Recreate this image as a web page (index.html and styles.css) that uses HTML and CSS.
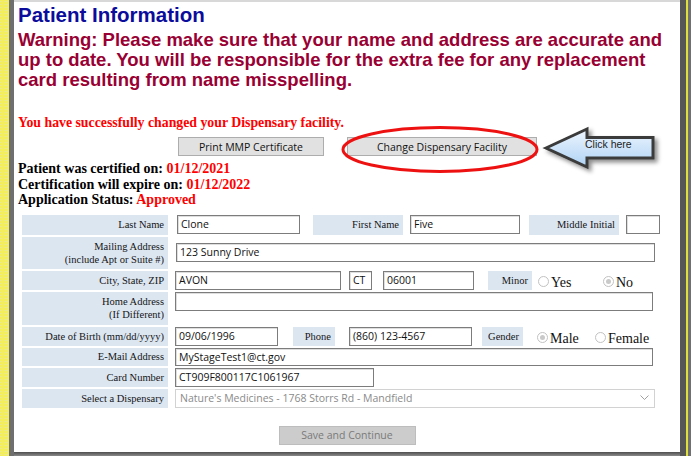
FILE: index.html
```html
<!DOCTYPE html>
<html>
<head>
<meta charset="utf-8">
<link rel="stylesheet" href="styles.css">
</head>
<body>
<div class="page">
  <div class="tex"></div>
  <div class="col">
    <div class="topline"></div>
    <div class="panel">
      <h1 class="title">Patient Information</h1>
      <p class="warn">Warning: Please make sure that your name and address are accurate and<br>up to date. You will be responsible for the extra fee for any replacement<br>card resulting from name misspelling.</p>
      <div class="success">You have successfully changed your Dispensary facility.</div>
      <div class="btnrow">
        <div class="btn print">Print MMP Certificate</div>
        <div class="btn change">Change Dispensary Facility</div>
      </div>
      <div class="cert">
        <div>Patient was certified on: <span class="red">01/12/2021</span></div>
        <div>Certification will expire on: <span class="red">01/12/2022</span></div>
        <div>Application Status: <span class="red">Approved</span></div>
      </div>
      <div class="form">
        <div class="row r1">
          <div class="lb">Last Name</div>
          <div class="in w-clone">Clone</div>
          <div class="lbi w-fn">First Name</div>
          <div class="in w-first">Five</div>
          <div class="lbi w-mi">Middle Initial</div>
          <div class="in w-mid"></div>
        </div>
        <div class="row r2">
          <div class="lb"><span>Mailing Address</span><span>(include Apt or Suite #)</span></div>
          <div class="in w-mail">123 Sunny Drive</div>
        </div>
        <div class="row r3">
          <div class="lb">City, State, ZIP</div>
          <div class="in w-city">AVON</div>
          <div class="in w-st">CT</div>
          <div class="in w-zip">06001</div>
          <div class="lbi w-minor">Minor</div>
          <div class="opt o-yes"><span class="rad"></span><span class="ot">Yes</span></div>
          <div class="opt"><span class="rad on"></span><span class="ot">No</span></div>
        </div>
        <div class="row r4">
          <div class="lb"><span>Home Address</span><span>(If Different)</span></div>
          <div class="in w-home"></div>
        </div>
        <div class="row r5">
          <div class="lb">Date of Birth (mm/dd/yyyy)</div>
          <div class="in w-dob">09/06/1996</div>
          <div class="lbi w-phone">Phone</div>
          <div class="in w-ph">(860) 123-4567</div>
          <div class="lbi w-gender">Gender</div>
          <div class="opt o-male"><span class="rad on"></span><span class="ot">Male</span></div>
          <div class="opt"><span class="rad"></span><span class="ot">Female</span></div>
        </div>
        <div class="row r6">
          <div class="lb">E-Mail Address</div>
          <div class="in w-email">MyStageTest1@ct.gov</div>
        </div>
        <div class="row r7">
          <div class="lb">Card Number</div>
          <div class="in w-card">CT909F800117C1061967</div>
        </div>
        <div class="row r8">
          <div class="lb">Select a Dispensary</div>
          <div class="sel"><span>Nature's Medicines - 1768 Storrs Rd - Mandfield</span><svg class="chev" width="9" height="6" viewBox="0 0 9 6"><polyline points="0.5,0.5 4.5,4.5 8.5,0.5" fill="none" stroke="#a0a0a0" stroke-width="1"/></svg></div>
        </div>
      </div>
      <div class="saverow"><div class="save">Save and Continue</div></div>
    </div>
    <div class="bottomband"></div>
  </div>
  <div class="rside"></div>
  <svg class="overlay" width="694" height="462" viewBox="0 0 694 462">
    <defs>
      <linearGradient id="ag" x1="0" y1="0" x2="0" y2="1">
        <stop offset="0" stop-color="#eef6ff"/>
        <stop offset="1" stop-color="#aed2f4"/>
      </linearGradient>
      <filter id="sh" x="-20%" y="-30%" width="150%" height="170%">
        <feDropShadow dx="3" dy="3" stdDeviation="2" flood-color="#000" flood-opacity="0.45"/>
      </filter>
    </defs>
    <ellipse cx="440" cy="149.5" rx="97" ry="22" fill="none" stroke="#ee1111" stroke-width="3"/>
    <path d="M546,148 L587,129 L587,137.5 L653,137.5 L653,158 L587,158 L587,167 Z" fill="url(#ag)" stroke="#3a3a3a" stroke-width="3" stroke-linejoin="miter" filter="url(#sh)"/>
    <text x="585" y="148" class="click">Click here</text>
  </svg>
</div>
</body>
</html>
```
FILE: styles.css
```css
html, body {
  margin: 0;
  padding: 0;
  background: #fff;
}
.page {
  position: relative;
  display: flex;
  width: 694px;
  height: 462px;
  overflow: hidden;
  font-family: "Liberation Serif", serif;
}
.tex {
  width: 9px;
  height: 456px;
  background-color: #f2ee5c;
  background-image: radial-gradient(circle, #e4e4b8 0.7px, transparent 1px);
  background-size: 3px 3px;
}
.col {
  width: 666px;
  height: 456px;
  border-left: 5px solid #6f6f6f;
  display: flex;
  flex-direction: column;
}
.topline {
  height: 2px;
  background: #d8d8d8;
}
.panel {
  height: 450px;
  box-sizing: border-box;
  padding: 1px 0 0 4px;
  background: #fff;
}
.bottomband {
  height: 4px;
  background: linear-gradient(#4e4e4e, #8a8a8a);
}
.rside {
  width: 11px;
  height: 456px;
  background: linear-gradient(to right, #565656 0 6px, #dede3c 6px 8px, #707070 8px 11px);
}
.title {
  margin: 0;
  font: bold 20.5px/24px "Liberation Sans", Arial, sans-serif;
  color: #0c0c9c;
}
.warn {
  margin: 3px 0 0;
  font: bold 18.5px/20px "Liberation Sans", Arial, sans-serif;
  color: #990033;
  white-space: nowrap;
}
.success {
  margin-top: 25px;
  font: bold 13.8px/16px "Liberation Serif", serif;
  color: #ff0000;
}
.btnrow {
  display: flex;
  margin-top: 6px;
  padding-left: 160px;
  gap: 23px;
}
.btn {
  height: 19px;
  box-sizing: border-box;
  background: #e1e1e1;
  border: 1px solid #adadad;
  font: 10.5px "Open Sans", sans-serif;
  color: #111;
  display: flex;
  align-items: center;
  justify-content: center;
}
.print { width: 146px; }
.change { width: 190px; }
.cert {
  margin-top: 5px;
  font: bold 14px/15.5px "Liberation Serif", serif;
  color: #000;
}
.red { color: #ff0000; }
.form {
  margin: 7px 0 0 4px;
  display: flex;
  flex-direction: column;
  gap: 2px;
}
.row {
  display: flex;
  align-items: center;
}
.r1 { height: 20px; }
.r2 { height: 32px; }
.r3 { height: 19px; }
.r4 { height: 33px; align-items: flex-start; }
.r5 { height: 19px; }
.r6 { height: 18px; }
.r7 { height: 19px; }
.r8 { height: 19px; }
.lb, .lbi {
  align-self: stretch;
  box-sizing: border-box;
  background: #dce6f1;
  padding-right: 4px;
  display: flex;
  flex-direction: column;
  justify-content: center;
  align-items: flex-end;
  text-align: right;
  font: 10.5px/13px "Liberation Serif", serif;
  color: #151515;
  white-space: nowrap;
}
.lb { width: 146px; }
.in {
  height: 19px;
  box-sizing: border-box;
  border: 1px solid #7c7c7c;
  box-shadow: inset 1px 1px 0 #dedede;
  background: #fff;
  padding-left: 3px;
  font: 10.5px/17px "Open Sans", sans-serif;
  color: #111;
  white-space: nowrap;
  overflow: hidden;
}
.r6 .in { height: 18px; line-height: 16px; }
.w-clone { margin-left: 9px; width: 123px; }
.w-fn { margin-left: 13px; width: 90px; }
.w-first { margin-left: 7px; width: 110px; }
.w-mi { margin-left: 9px; width: 90px; }
.w-mid { margin-left: 7px; width: 34px; }
.w-mail { margin-left: 8px; width: 479px; }
.w-city { margin-left: 7px; width: 166px; }
.w-st { margin-left: 8px; width: 23px; }
.w-zip { margin-left: 11px; width: 91px; }
.w-minor { margin-left: 14px; width: 44px; }
.w-home { margin-left: 7px; width: 478px; }
.w-dob { margin-left: 7px; width: 103px; }
.w-phone { margin-left: 15px; width: 42px; }
.w-ph { margin-left: 14px; width: 123px; }
.w-gender { margin-left: 10px; width: 41px; }
.w-email { margin-left: 7px; width: 478px; }
.w-card { margin-left: 7px; width: 199px; }
.opt {
  align-self: stretch;
  display: flex;
  align-items: flex-end;
}
.o-yes { margin-left: 6px; width: 65px; }
.o-male { margin-left: 14px; width: 58px; }
.rad {
  position: relative;
  width: 11px;
  height: 11px;
  box-sizing: border-box;
  border: 1px solid #c2c2c2;
  border-radius: 50%;
  background: #fff;
  margin-bottom: 3px;
}
.rad.on::after {
  content: "";
  position: absolute;
  inset: 2px;
  border-radius: 50%;
  background: #c9c9c9;
}
.ot {
  margin-left: 2px;
  font: 14px/15px "Liberation Serif", serif;
  color: #111;
}
.sel {
  margin-left: 7px;
  width: 480px;
  height: 19px;
  box-sizing: border-box;
  border: 1px solid #d2d2d2;
  background: #fff;
  padding: 0 5px 0 4px;
  display: flex;
  align-items: center;
  justify-content: space-between;
  font: 10.5px "Open Sans", sans-serif;
  color: #8a8a8a;
  white-space: nowrap;
}
.chev { display: block; }
.saverow {
  display: flex;
  justify-content: center;
  margin: 18px 0 0 -4px;
}
.save {
  width: 137px;
  height: 19px;
  box-sizing: border-box;
  background: #cccccc;
  border: 1px solid #bdbdbd;
  color: #7a7a7a;
  font: 10.5px "Open Sans", sans-serif;
  display: flex;
  align-items: center;
  justify-content: center;
}
.overlay {
  position: absolute;
  left: 0;
  top: 0;
  pointer-events: none;
}
.click {
  font: 10.5px "Liberation Sans", Arial, sans-serif;
  fill: #222;
}
```
